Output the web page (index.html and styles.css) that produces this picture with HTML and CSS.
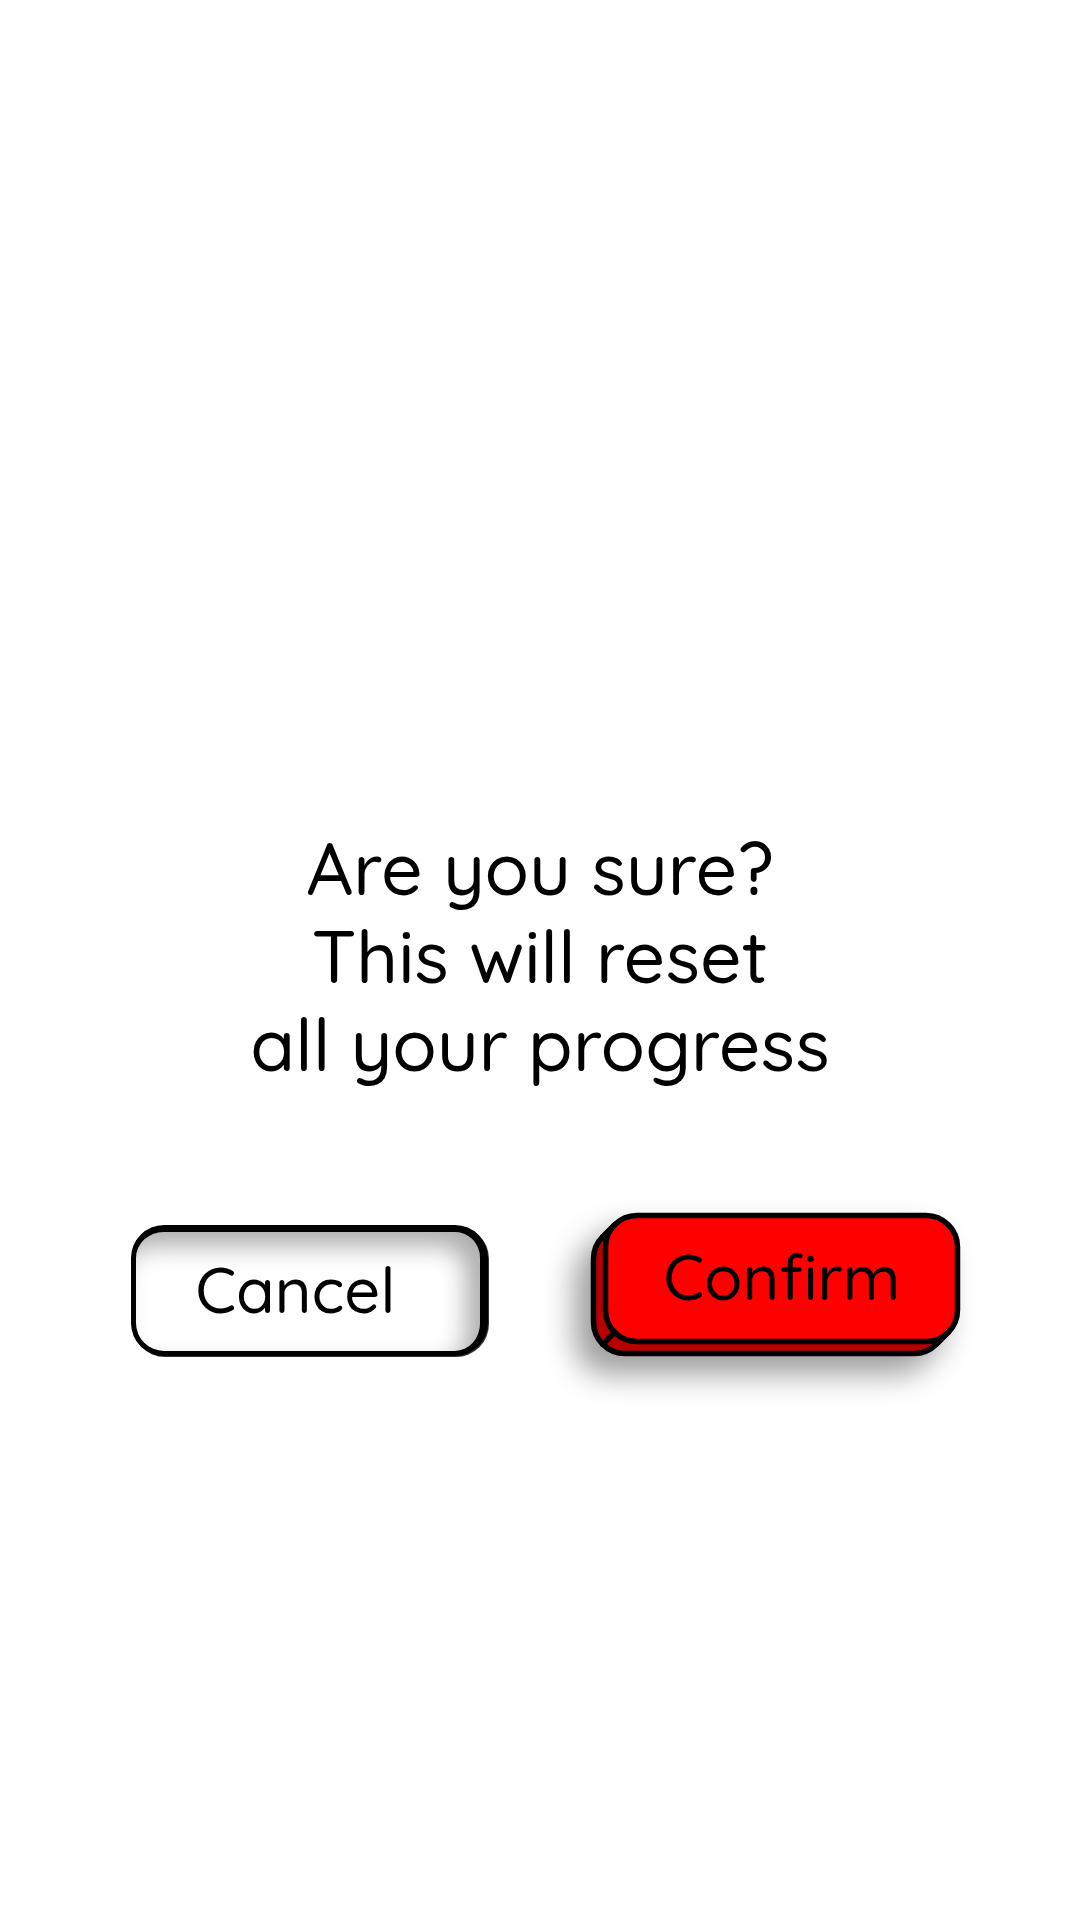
FILE: index.html
```
<!DOCTYPE html>
<html lang="en">
<head>
<meta charset="utf-8">
<meta name="viewport" content="width=device-width, initial-scale=1">
<title>Reset progress</title>
<link rel="stylesheet" href="styles.css">
</head>
<body>
<main class="dialog">
  <h1 class="message">Are you sure?<br>This will reset<br>all your progress</h1>
  <div class="actions">
    <button class="button cancel" type="button">Cancel</button>
    <button class="button confirm" type="button">
      <svg class="block" viewBox="0 0 369 143" aria-hidden="true">
        <g stroke="#000" stroke-width="5.5" stroke-linecap="round">
          <rect x="2.5" y="14.5" width="352" height="126" rx="31.5" fill="#b80000"/>
          <path d="M23.7 11.7 11.7 23.7M357.3 119.3 345.3 131.3M23.7 119.3 11.7 131.3"/>
          <path d="M24 14 14 24M355 119 345 129"/>
          <rect x="14.5" y="2.5" width="352" height="126" rx="31.5" fill="#f00"/>
        </g>
      </svg>
      <span class="label">Confirm</span>
    </button>
  </div>
</main>
</body>
</html>
```
FILE: styles.css
```
* { box-sizing: border-box; }

body {
  margin: 0;
  background: #fff;
  color: #000;
  font-family: Quicksand, Lato, sans-serif;
}

.dialog {
  display: grid;
  grid-template-rows: 1fr auto 1fr;
  min-height: 100vh;
}

.message {
  grid-row: 2;
  margin: 0;
  padding-bottom: 8px;
  font-size: 73px;
  font-weight: 500;
  line-height: 88px;
  text-align: center;
}

.actions {
  grid-row: 3;
  display: flex;
  justify-content: center;
  align-items: flex-start;
  gap: 115px;
  padding: 117px 0 0 10px;
}

.button {
  width: 357px;
  height: 131px;
  color: inherit;
  font: inherit;
  font-size: 63px;
  font-weight: 500;
  line-height: 80px;
  cursor: pointer;
}

/* Pressed-in state: thick upper right rim with an inner shadow */
.cancel {
  margin-top: 12px;
  padding: 0 24px 4px 0;
  border: solid #000;
  border-width: 7px 8px 5px 5px;
  border-radius: 33px;
  background: #fff;
  box-shadow: 1px 1px 0 #333, inset -14px 14px 24px rgba(0, 0, 0, 0.32);
}

/* Raised state: block with visible left and bottom sides */
.confirm {
  position: relative;
  padding: 0 0 4px 2px;
  border: 0;
  background: none;
}

.block {
  position: absolute;
  top: 0;
  right: 0;
  width: 369px;
  height: 143px;
  overflow: visible;
  filter: drop-shadow(-16px 18px 15px rgba(0, 0, 0, 0.38));
}

.label { position: relative; }
```
